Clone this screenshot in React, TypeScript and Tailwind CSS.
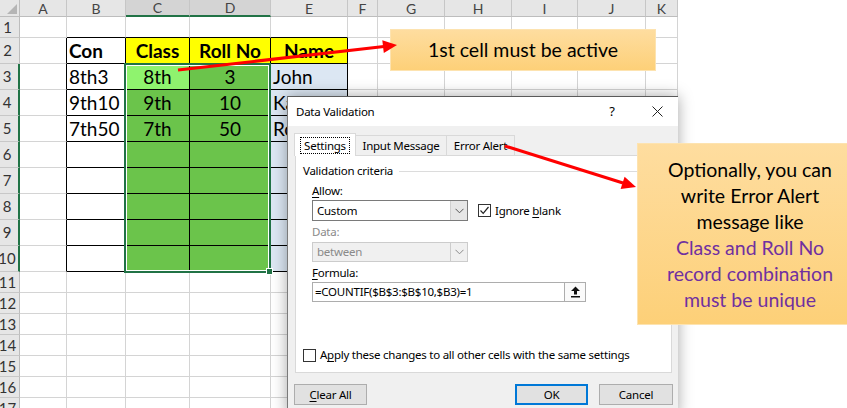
import React from 'react';

const colLetters = ['', 'A', 'B', 'C', 'D', 'E', 'F', 'G', 'H', 'I', 'J', 'K'];
const rows = Array.from({ length: 18 }, (_, i) => i);

type CellData = { text: string; bold?: boolean; center?: boolean };

const data: Record<string, CellData> = {
  '2-2': { text: 'Con', bold: true },
  '2-3': { text: 'Class', bold: true, center: true },
  '2-4': { text: 'Roll No', bold: true, center: true },
  '2-5': { text: 'Name', bold: true, center: true },
  '3-2': { text: '8th3' },
  '3-3': { text: '8th', center: true },
  '3-4': { text: '3', center: true },
  '3-5': { text: 'John' },
  '4-2': { text: '9th10' },
  '4-3': { text: '9th', center: true },
  '4-4': { text: '10', center: true },
  '4-5': { text: 'Ka' },
  '5-2': { text: '7th50' },
  '5-3': { text: '7th', center: true },
  '5-4': { text: '50', center: true },
  '5-5': { text: 'Ro' },
};

const cellBg = (r: number, c: number) => {
  if (r === 2 && c >= 3 && c <= 5) return 'bg-[#ffff00]';
  if (r === 3 && c === 3) return 'bg-[#8ff36e]';
  if (r >= 3 && r <= 10 && (c === 3 || c === 4)) return 'bg-[#6bc44b]';
  if (r >= 3 && r <= 10 && c === 5) return 'bg-[#dce7f3]';
  return 'bg-white';
};

const GridCell = ({ r, c }: { r: number; c: number }) => {
  if (r === 0) {
    if (c === 0) {
      return (
        <div className="relative bg-[#e6e6e6] border-r border-b border-r-[#bdbdbd] border-b-[#bdbdbd]">
          <div className="absolute right-[2px] bottom-[2px] h-0 w-0 [border-bottom:10px_solid_#b5b5b5] [border-left:10px_solid_transparent]" />
        </div>
      );
    }
    const sel = c === 3 || c === 4;
    return (
      <div
        className={`flex items-center justify-center border-r border-r-[#c6c6c6] text-[14px] text-[#444] ${
          sel ? 'bg-[#d4d4d4] border-b-2 border-b-[#217346]' : 'bg-[#e6e6e6] border-b border-b-[#bdbdbd]'
        }`}
      >
        {colLetters[c]}
      </div>
    );
  }
  if (c === 0) {
    const sel = r >= 3 && r <= 10;
    return (
      <div
        className={`flex items-center justify-center pr-[4px] bg-[#e6e6e6] border-b border-b-[#c8c8c8] text-[15px] text-[#333] ${
          sel ? 'border-r-2 border-r-[#217346]' : 'border-r border-r-[#bdbdbd]'
        }`}
      >
        {r}
      </div>
    );
  }
  const rightBlack = r >= 2 && r <= 10 && c >= 1 && c <= 5;
  const bottomBlack = r >= 1 && r <= 10 && c >= 2 && c <= 5;
  const d = data[`${r}-${c}`];
  return (
    <div
      className={`flex items-center overflow-hidden whitespace-nowrap border-r border-b text-[19px] leading-none text-black ${cellBg(r, c)} ${
        rightBlack ? 'border-r-black' : 'border-r-[#d4d4d4]'
      } ${bottomBlack ? 'border-b-black' : 'border-b-[#d4d4d4]'} ${d?.center ? 'justify-center' : 'pl-[2px]'} ${
        d?.bold ? 'font-bold' : ''
      }`}
    >
      {d?.text}
    </div>
  );
};

const Chevron = ({ color = '#555' }: { color?: string }) => (
  <svg width="9" height="6" viewBox="0 0 9 6">
    <polyline points="0.5,0.8 4.5,4.8 8.5,0.8" fill="none" stroke={color} strokeWidth="1" />
  </svg>
);

const Checkbox = ({ checked }: { checked?: boolean }) => (
  <div className="flex h-[13px] w-[13px] items-center justify-center border border-[#333] bg-white">
    {checked && (
      <svg width="11" height="11" viewBox="0 0 11 11">
        <polyline points="1.5,5.5 4.2,8.3 9.5,2" fill="none" stroke="#222" strokeWidth="1.2" />
      </svg>
    )}
  </div>
);

const DataValidationDialog = () => (
  <div className="absolute left-[287px] top-[96px] flex h-[320px] w-[391px] flex-col border-l border-t border-l-[#7a7a7a] border-t-[#5a5a5a] bg-[#f0f0f0] font-['Noto_Sans',sans-serif] text-[11.5px] tracking-[-0.25px] text-black shadow-[0_0_14px_rgba(0,0,0,0.35)]">
    <div className="flex h-[29px] items-center bg-white pl-[8px]">
      <span>Data Validation</span>
      <span className="ml-auto w-[20px] text-center text-[13px]">?</span>
      <span className="ml-[25px] mr-[11px] flex w-[20px] justify-center">
        <svg width="11" height="11" viewBox="0 0 11 11">
          <path d="M0.5 0.5 L10.5 10.5 M10.5 0.5 L0.5 10.5" stroke="#222" strokeWidth="1" />
        </svg>
      </span>
    </div>

    <div className="pl-[6px] pt-[7px]">
      <div className="flex h-[22px] items-end">
        <div className="relative z-10 flex h-[23px] w-[62px] translate-y-[1px] items-center justify-center border border-b-0 border-[#d9d9d9] bg-white">
          <span className="border border-dotted border-black px-[3px] leading-[15px]">Settings</span>
        </div>
        <div className="flex h-[20px] w-[91px] items-center justify-center border border-l-0 border-b-0 border-[#d9d9d9]">
          Input Message
        </div>
        <div className="flex h-[20px] w-[68px] items-center justify-center border border-l-0 border-b-0 border-[#d9d9d9]">
          Error Alert
        </div>
      </div>

      <div className="ml-[1px] flex h-[218px] w-[377px] flex-col border border-[#d9d9d9] bg-white pl-[7px]">
        <div className="mt-[7px] flex h-[16px] items-center">
          <span>Validation criteria</span>
          <div className="ml-[6px] mr-[8px] h-px flex-1 bg-[#dcdcdc]" />
        </div>

        <div className="ml-[9px] flex flex-col">
          <div className="mt-[4px] flex h-[16px] items-center">
            <span>
              <span className="underline underline-offset-2">A</span>llow:
            </span>
          </div>
          <div className="mt-[1px] flex h-[21px] items-center">
            <div className="flex h-full w-[156px] items-stretch border border-[#7a7a7a] bg-white">
              <span className="flex flex-1 items-center pl-[4px]">Custom</span>
              <span className="flex w-[17px] items-center justify-center border-l border-[#cfcfcf] bg-[#e6e6e6]">
                <Chevron />
              </span>
            </div>
            <div className="ml-[10px]">
              <Checkbox checked />
            </div>
            <span className="ml-[4px]">
              Ignore <span className="underline underline-offset-2">b</span>lank
            </span>
          </div>

          <div className="mt-[3px] flex h-[16px] items-center text-[#8a8a8a]">Data:</div>
          <div className="mt-[2px] flex h-[20px] w-[156px] items-stretch border border-[#cccccc] bg-[#f0f0f0] text-[#8a8a8a]">
            <span className="flex flex-1 items-center pl-[4px]">between</span>
            <span className="flex w-[17px] items-center justify-center border-l border-[#cccccc]">
              <Chevron color="#8a8a8a" />
            </span>
          </div>

          <div className="mt-[3px] flex h-[16px] items-center">
            <span>
              <span className="underline underline-offset-2">F</span>ormula:
            </span>
          </div>
          <div className="mt-[1px] flex h-[20px] w-[274px] items-stretch border border-[#adadad] bg-white">
            <span className="flex flex-1 items-center pl-[2px]">=COUNTIF($B$3:$B$10,$B3)=1</span>
            <span className="flex w-[21px] items-center justify-center border-l border-[#adadad] bg-[#fafafa]">
              <svg width="11" height="12" viewBox="0 0 11 12">
                <path d="M5.5 0.5 L10 5 L7 5 L7 8.5 L4 8.5 L4 5 L1 5 Z" fill="#111" />
                <rect x="1" y="10" width="9" height="1.5" fill="#111" />
              </svg>
            </span>
          </div>
        </div>

        <div className="mt-[46px] flex h-[14px] items-center">
          <Checkbox />
          <span className="ml-[4px]">
            A<span className="underline underline-offset-2">p</span>ply these changes to all other cells with the same settings
          </span>
        </div>
      </div>

      <div className="mt-[11px] flex">
        <div className="flex h-[21px] w-[73px] items-center justify-center border border-[#adadad] bg-[#e1e1e1]">
          <span>
            <span className="underline underline-offset-2">C</span>lear All
          </span>
        </div>
        <div className="ml-[148px] flex h-[21px] w-[73px] items-center justify-center border-2 border-[#0078d7] bg-[#e1e1e1]">
          OK
        </div>
        <div className="ml-[11px] flex h-[21px] w-[74px] items-center justify-center border border-[#adadad] bg-[#e1e1e1]">
          Cancel
        </div>
      </div>
    </div>
  </div>
);

export default function App() {
  return (
    <div className="relative h-[408px] w-[847px] overflow-hidden bg-white font-['Lato',sans-serif]">
      <div className="grid w-[678px] grid-cols-[20px_47px_59px_64px_81px_77px_30px_67px_67px_66px_68px_32px] grid-rows-[17px_21px_26px_26px_26px_26px_26px_26px_26px_26px_26px_21px_21px_21px_21px_21px_21px_21px]">
        {rows.map((r) => colLetters.map((_, c) => <GridCell key={`${r}-${c}`} r={r} c={c} />))}
      </div>

      {/* selection around C3:D10 */}
      <div className="absolute left-[124px] top-[63px] h-[210px] w-[147px] border-2 border-[#217346] shadow-[inset_0_0_0_1px_#ffffff]" />
      <div className="absolute left-[266px] top-[268px] h-[7px] w-[7px] border border-white bg-[#217346]" />

      <DataValidationDialog />

      <div className="absolute left-[390px] top-[29px] flex h-[42px] w-[266px] items-center justify-center border border-[#fde3b0] bg-gradient-to-b from-[#fedd9f] to-[#fdd078] text-[19.5px] text-black">
        1st cell must be active
      </div>

      <div className="absolute left-[637px] top-[143px] flex h-[182px] w-[226px] flex-col items-center border border-[#fde3b0] bg-gradient-to-b from-[#fedd9f] to-[#fdd078] pt-[13px] text-[19.5px] leading-[26px]">
        <span className="text-black">Optionally, you can</span>
        <span className="text-black">write Error Alert</span>
        <span className="text-black">message like</span>
        <span className="text-[#7030a0]">Class and Roll No</span>
        <span className="text-[#7030a0]">record combination</span>
        <span className="text-[#7030a0]">must be unique</span>
      </div>

      <svg className="pointer-events-none absolute left-0 top-0" width="847" height="408">
        <line x1="178" y1="70" x2="384" y2="46.6" stroke="#ff0000" strokeWidth="3" />
        <polygon points="397,45 383.8,53 382.3,40.3" fill="#ff0000" />
        <line x1="505" y1="146" x2="623" y2="183" stroke="#ff0000" strokeWidth="3" />
        <polygon points="636,187 620.6,189 624.6,176.8" fill="#ff0000" />
      </svg>
    </div>
  );
}
